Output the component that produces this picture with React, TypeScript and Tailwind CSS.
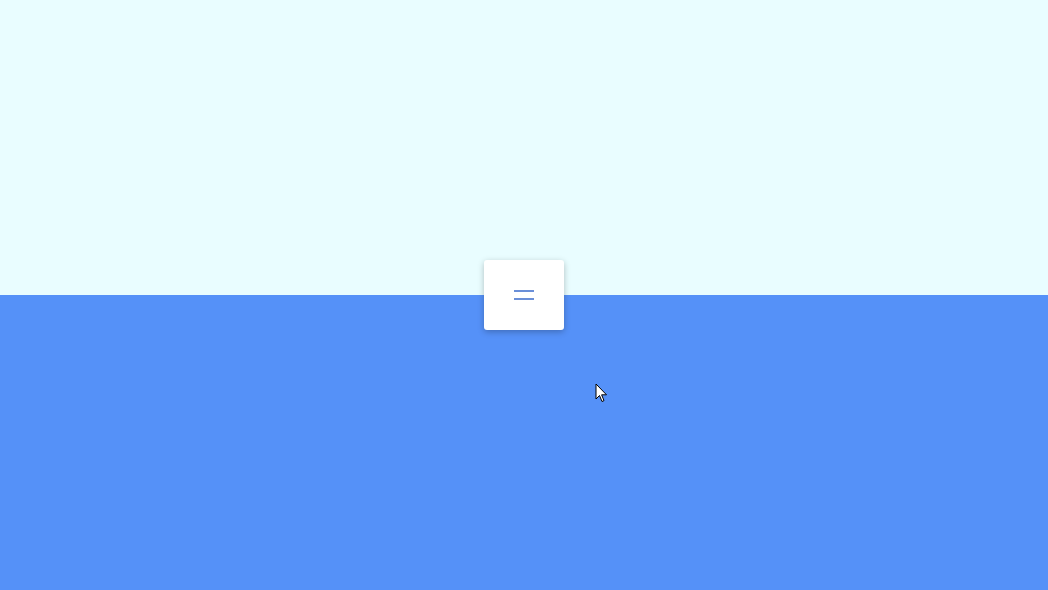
import React from 'react'

export default function App() {
  return (
    <div className="relative h-[590px] w-full flex flex-col overflow-hidden">
      {/* Top and bottom halves */}
      <div className="flex-1 bg-[#e9fdff]" />
      <div className="flex-1 bg-[#5591f8]" />

      {/* Menu button sitting over the seam */}
      <button
        type="button"
        className="absolute left-1/2 top-1/2 -translate-x-1/2 -translate-y-1/2 w-[80px] h-[70px] bg-white rounded-[3px] shadow-[0_2px_6px_rgba(0,0,0,0.25)] flex flex-col items-center justify-center gap-[6px]"
      >
        <span className="block w-[20px] h-[2px] bg-[#6a8fd8]" />
        <span className="block w-[20px] h-[2px] bg-[#6a8fd8]" />
      </button>

      {/* Mouse pointer */}
      <svg
        className="absolute left-[595px] top-[383px]"
        width="13"
        height="21"
        viewBox="0 0 13 21"
      >
        <path
          d="M1 1 L1 16 L4.5 12.5 L7 18.5 L9 17.6 L6.6 11.8 L11.5 11.8 Z"
          fill="#ffffff"
          stroke="#000000"
          strokeWidth="1"
          strokeLinejoin="round"
        />
      </svg>
    </div>
  )
}
